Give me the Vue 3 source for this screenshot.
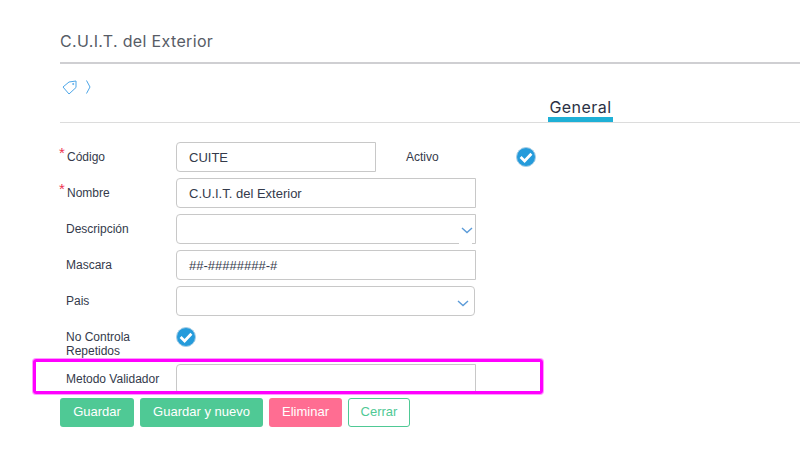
<script setup>
const btns = [
  { t: 'Guardar', c: 'green w74' },
  { t: 'Guardar y nuevo', c: 'green w123' },
  { t: 'Eliminar', c: 'pink w73' },
  { t: 'Cerrar', c: 'outline w62' },
]
</script>

<template>
  <div class="page">
    <h1 class="title">C.U.I.T. del Exterior</h1>
    <div class="crumbs">
      <svg width="16" height="16" viewBox="0 0 16 16" fill="none" stroke="#4da6e8" stroke-width="1">
        <path d="M1 8 L7 3 L14 2 L14 8.5 L7 15 Z" stroke-linejoin="round" />
        <circle cx="11.2" cy="5" r="0.6" />
      </svg>
      <svg class="chev" width="8" height="16" viewBox="0 0 8 16" fill="none" stroke="#4da6e8" stroke-width="1">
        <path d="M1.5 1.5 L5 8 L1.5 14.5" />
      </svg>
    </div>
    <div class="tabs"><span class="tab">General</span></div>

    <form class="form" @submit.prevent>
      <div class="row">
        <label class="lbl req">Código</label>
        <div class="input short"><span>CUITE</span></div>
        <label class="lbl side">Activo</label>
        <svg class="check" width="20" height="20" viewBox="0 0 20 20">
          <circle cx="10" cy="10" r="9.5" fill="#259bdb" stroke="#a9cfe6" stroke-width="1" />
          <path d="M4.6 10 L8.6 14 L15.4 6.8" fill="none" stroke="#fff" stroke-width="2.8" />
        </svg>
      </div>
      <div class="row">
        <label class="lbl req">Nombre</label>
        <div class="input"><span>C.U.I.T. del Exterior</span></div>
      </div>
      <div class="row">
        <label class="lbl">Descripción</label>
        <div class="input select">
          <svg class="arrow" width="12" height="7" viewBox="0 0 12 7" fill="none" stroke="#5b9bd8" stroke-width="1.4">
            <path d="M1 1 L6 5.5 L11 1" />
          </svg>
          <i class="notch"></i>
        </div>
      </div>
      <div class="row">
        <label class="lbl">Mascara</label>
        <div class="input"><span>##-########-#</span></div>
      </div>
      <div class="row">
        <label class="lbl">Pais</label>
        <div class="input rounded">
          <svg class="arrow a2" width="12" height="7" viewBox="0 0 12 7" fill="none" stroke="#5b9bd8" stroke-width="1.4">
            <path d="M1 1 L6 5.5 L11 1" />
          </svg>
        </div>
      </div>
      <div class="row tall">
        <label class="lbl two">No Controla Repetidos</label>
        <svg class="check" width="20" height="20" viewBox="0 0 20 20">
          <circle cx="10" cy="10" r="9.5" fill="#259bdb" stroke="#a9cfe6" stroke-width="1" />
          <path d="M4.6 10 L8.6 14 L15.4 6.8" fill="none" stroke="#fff" stroke-width="2.8" />
        </svg>
      </div>
      <div class="row">
        <label class="lbl">Metodo Validador</label>
        <div class="input"></div>
      </div>
    </form>

    <div class="actions">
      <button v-for="b in btns" :key="b.t" type="button" class="btn" :class="b.c">{{ b.t }}</button>
    </div>

    <div class="highlight"></div>
  </div>
</template>

<style scoped>
.page {
  position: relative;
  width: 800px;
  height: 462px;
  box-sizing: border-box;
  padding: 30px 0 0 60px;
  overflow: hidden;
  background: #fff;
  font-family: "Liberation Sans", Arial, sans-serif;
  color: #343a4b;
}
.title {
  margin: 0;
  height: 32px;
  border-bottom: 2px solid #cfcfd2;
  font-family: Inter, sans-serif;
  font-size: 16px;
  font-weight: 400;
  line-height: 22px;
  letter-spacing: 0.35px;
  color: #575c66;
}
.crumbs {
  display: flex;
  align-items: center;
  gap: 7px;
  height: 16px;
  margin: 15px 0 0 2px;
}
.tabs {
  display: flex;
  height: 23px;
  margin-top: 4px;
  padding-left: 488px;
  border-bottom: 1px solid #dcdcdc;
}
.tab {
  box-sizing: border-box;
  width: 65px;
  height: 23px;
  border-bottom: 5px solid #1fb0d6;
  text-align: center;
  font-family: Inter, sans-serif;
  font-size: 16px;
  line-height: 17px;
  letter-spacing: 0.45px;
  color: #2b3245;
}
.form {
  display: flex;
  flex-direction: column;
  gap: 6px;
  margin-top: 19px;
}
.row {
  display: flex;
  align-items: center;
  height: 30px;
}
.row.tall { height: 36px; align-items: flex-start; }
.lbl {
  flex: none;
  width: 110px;
  margin-left: 6px;
  font-size: 12px;
  line-height: 14px;
  color: #343a4b;
}
.lbl.req { position: relative; margin-left: 7px; width: 109px; }
.lbl.req::before {
  content: "*";
  position: absolute;
  left: -8px;
  top: -5px;
  color: #ee3350;
  font-size: 15px;
  line-height: 15px;
}
.lbl.two { width: 90px; margin-right: 20px; margin-top: 8px; }
.input {
  position: relative;
  box-sizing: border-box;
  flex: none;
  width: 300px;
  height: 30px;
  padding-left: 12px;
  border: 1px solid #c8c8c8;
  border-radius: 4px 0 0 4px;
  font-size: 13px;
  line-height: 30px;
  color: #343a4b;
}
.input.short { width: 200px; }
.input.rounded { width: 299px; border-radius: 4px; }
.input span { display: block; line-height: 29px; }
.side { margin-left: 30px; width: 110px; }
.check { flex: none; }
.row.tall .check { margin-top: 5px; }
.arrow { position: absolute; right: 2px; top: 12px; }
.arrow.a2 { right: 5px; top: 13px; }
.notch {
  position: absolute;
  right: 3px;
  bottom: -1px;
  width: 13px;
  height: 2px;
  background: #fff;
}
.actions {
  display: flex;
  gap: 6px;
  margin-top: 4px;
}
.btn {
  box-sizing: border-box;
  height: 29px;
  padding: 0 0 2px;
  border: 1px solid transparent;
  border-radius: 3px;
  font-family: "Liberation Sans", Arial, sans-serif;
  font-size: 13px;
  color: #fff;
}
.green { background: #4fc995; }
.pink { background: #ff6d92; }
.outline { background: #fff; border-color: #4fc995; color: #4fc995; }
.w74 { width: 74px; }
.w123 { width: 123px; }
.w73 { width: 73px; }
.w62 { width: 62px; }
.highlight {
  position: absolute;
  left: 33px;
  top: 359px;
  box-sizing: border-box;
  width: 510px;
  height: 35px;
  border: 3px solid #ff00ff;
  border-radius: 3px;
  box-shadow: 0 0 0 1px rgba(255, 0, 255, 0.4);
  pointer-events: none;
}
</style>
